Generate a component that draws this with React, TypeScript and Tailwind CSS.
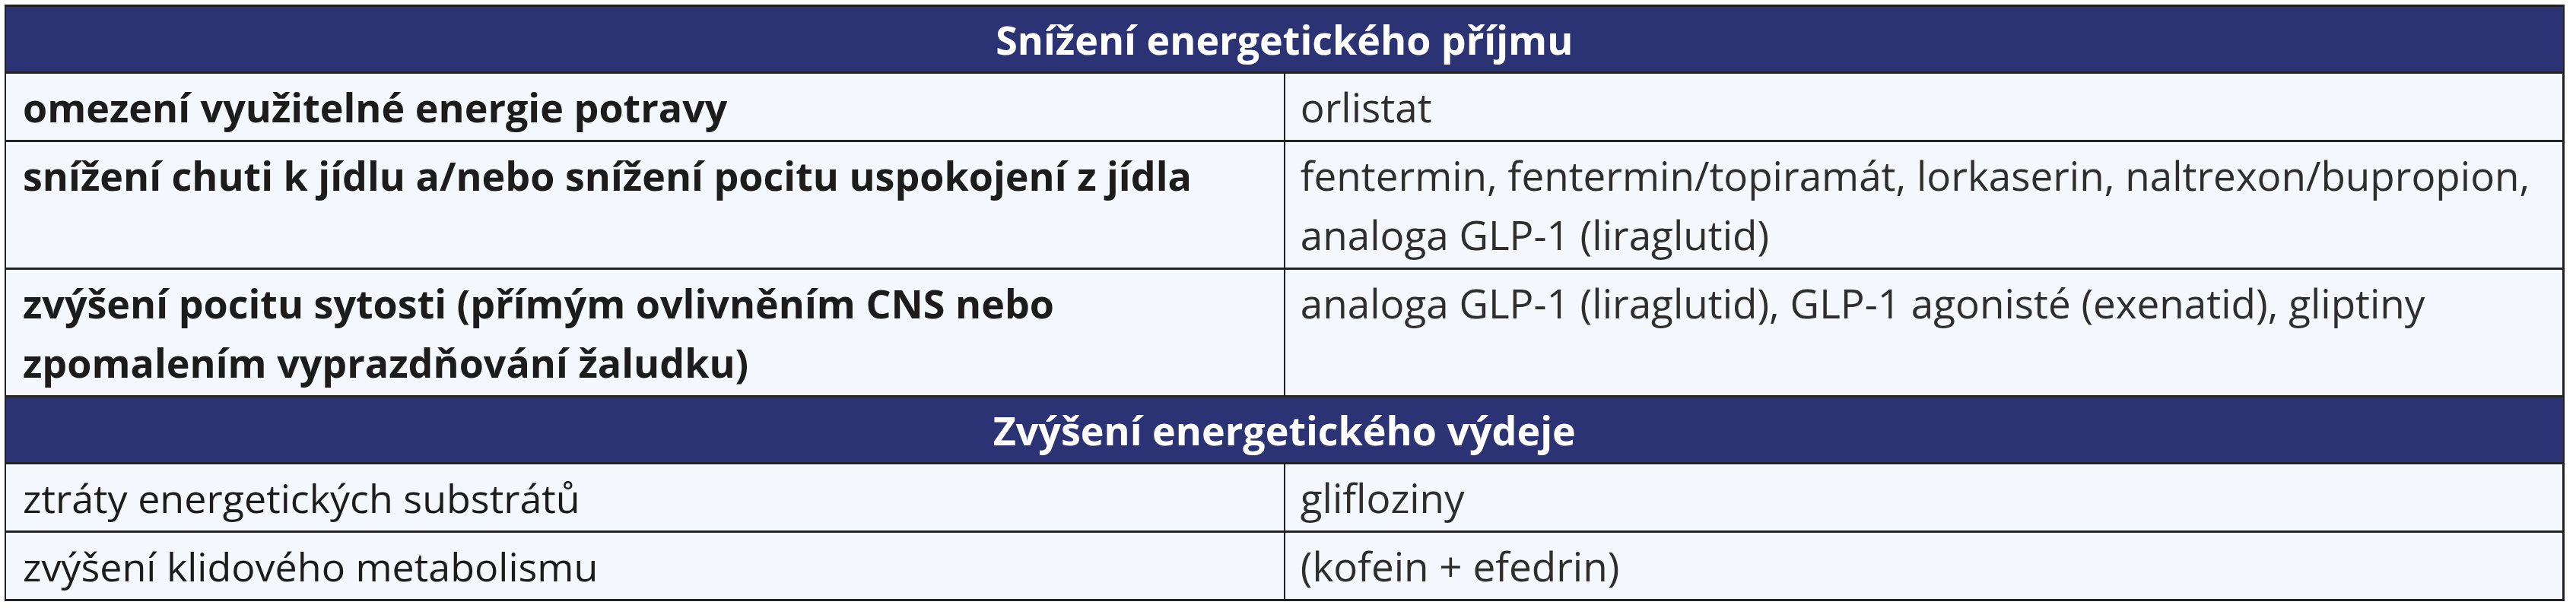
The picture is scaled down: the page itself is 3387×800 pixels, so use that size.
import React from 'react';

type Row = { left: string; right: string; bold?: boolean };

const intake: Row[] = [
  { left: 'omezení využitelné energie potravy', right: 'orlistat', bold: true },
  {
    left: 'snížení chuti k jídlu a/nebo snížení pocitu uspokojení z jídla',
    right: 'fentermin, fentermin/topiramát, lorkaserin, naltrexon/bupropion, analoga GLP-1 (liraglutid)',
    bold: true,
  },
  {
    left: 'zvýšení pocitu sytosti (přímým ovlivněním CNS nebo zpomalením vyprazdňování žaludku)',
    right: 'analoga GLP-1 (liraglutid), GLP-1 agonisté (exenatid), gliptiny',
    bold: true,
  },
];

const expenditure: Row[] = [
  { left: 'ztráty energetických substrátů', right: 'glifloziny' },
  { left: 'zvýšení klidového metabolismu', right: '(kofein + efedrin)' },
];

function Header({ title }: { title: string }) {
  return (
    <tr>
      <th
        colSpan={2}
        className="bg-[#2b3375] text-white font-bold text-[52px] leading-[78px] h-[88px] border-y-[3px] border-x-2 border-[#222] text-center align-middle"
      >
        {title}
      </th>
    </tr>
  );
}

function BodyRow({ row }: { row: Row }) {
  return (
    <tr className="bg-[#f4f8fc]">
      <td
        className={`w-1/2 align-top px-[22px] pt-[5px] pb-[4px] border-l-2 border-r-2 border-b-[3px] border-[#222] text-[#1c1c1c] ${
          row.bold ? 'font-bold' : 'font-normal'
        }`}
      >
        {row.left}
      </td>
      <td className="w-1/2 align-top px-[20px] pt-[5px] pb-[4px] border-r-[3px] border-b-[3px] border-[#222] text-[#2e2e2e] text-[53px]">
        {row.right}
      </td>
    </tr>
  );
}

export default function App() {
  return (
    <div className="bg-white w-[3387px] h-[800px] pt-[6px] pl-[6px]">
      <table className="w-[3366px] table-fixed border-collapse font-['Open_Sans',sans-serif] text-[52px] leading-[78px]">
        <tbody>
          <Header title="Snížení energetického příjmu" />
          {intake.map((r) => (
            <BodyRow key={r.left} row={r} />
          ))}
          <Header title="Zvýšení energetického výdeje" />
          {expenditure.map((r) => (
            <BodyRow key={r.left} row={r} />
          ))}
        </tbody>
      </table>
    </div>
  );
}
